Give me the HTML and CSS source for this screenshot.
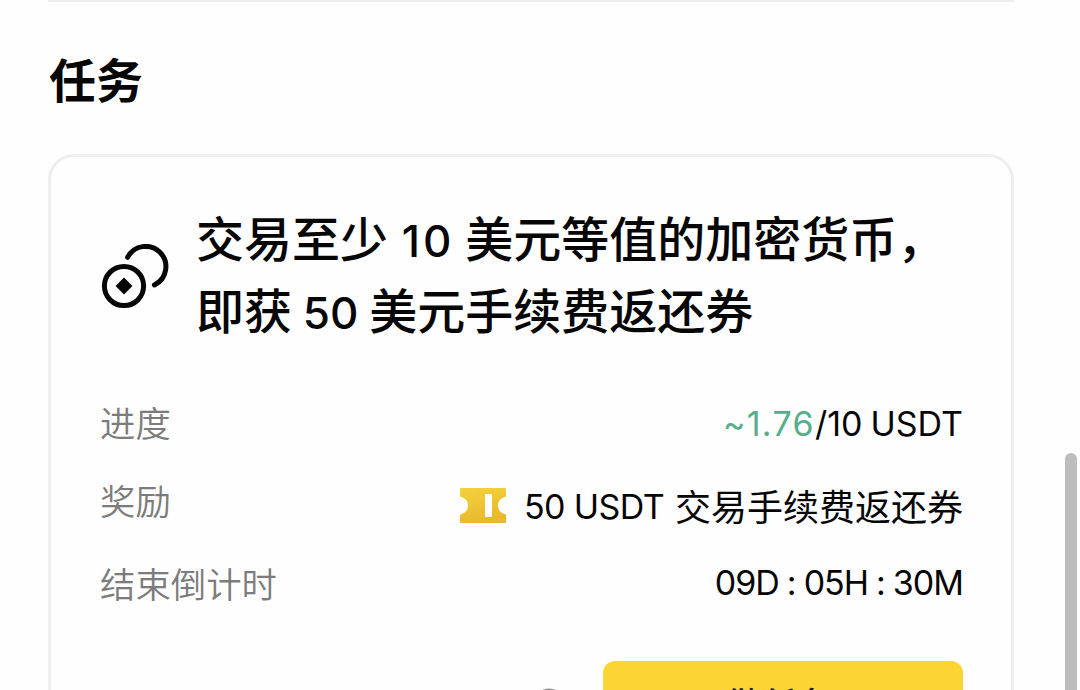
FILE: index.html
```html
<!DOCTYPE html>
<html lang="zh-CN">
<head>
<meta charset="utf-8">
<title>任务</title>
<link rel="stylesheet" href="styles.css">
</head>
<body>
<main class="page">
  <h1 class="section-title">任务</h1>
  <section class="card">
    <header class="card-head">
      <svg class="coins" viewBox="0 0 70 68" fill="none" stroke="#060606" stroke-width="5" stroke-linecap="round">
        <circle cx="24" cy="42" r="19.6"/>
        <path d="M27.6 13.3A20.3 20.3 0 1 1 54.4 41"/>
        <path d="M24 33.5L32.5 42L24 50.5L15.5 42Z" fill="#060606" stroke="none"/>
      </svg>
      <h2 class="card-title">交易至少 <span class="num num-wide">10</span> 美元等值的加密货币，<br>即获 <span class="num">50</span> 美元手续费返还券</h2>
    </header>
    <dl class="rows">
      <div class="row row-progress">
        <dt>进度</dt>
        <dd class="latin progress"><span class="done">~1.76</span><span class="total">/10</span><span class="unit">USDT</span></dd>
      </div>
      <div class="row row-reward">
        <dt>奖励</dt>
        <dd class="reward">
          <svg class="ticket" viewBox="0 0 46 36">
            <defs><linearGradient id="gold" x1="0" y1="0" x2="0.3" y2="1"><stop offset="0" stop-color="#f4d23d"/><stop offset="1" stop-color="#e9b92c"/></linearGradient></defs>
            <path fill="url(#gold)" d="M1 0H45Q46 0 46 1V8.5C40.500 10 38 13 38 17.500S40.500 25 46 26.500V34Q46 35 45 35H1Q0 35 0 34V26.500C5.500 25 8 22 8 17.500S5.500 10 0 8.500V1Q0 0 1 0Z"/>
            <rect x="25" y="6" width="7" height="23" rx="1" fill="#fff"/>
          </svg>
          <span class="latin amount">50 USDT</span><span class="coupon">交易手续费返还券</span>
        </dd>
      </div>
      <div class="row row-time">
        <dt>结束倒计时</dt>
        <dd class="latin time"><span>09D</span><span>:</span><span>05H</span><span>:</span><span>30M</span></dd>
      </div>
    </dl>
    <footer class="actions">
      <svg class="info" viewBox="0 0 36 36" fill="none" stroke="#929292" stroke-width="3"><circle cx="18" cy="18" r="16"/><path d="M18 16v10M18 9v3"/></svg>
      <button class="go">做任务</button>
    </footer>
  </section>
</main>
<div class="scrollbar"></div>
</body>
</html>
```
FILE: styles.css
```css
* { box-sizing: border-box; margin: 0; padding: 0; }
html, body { height: 690px; overflow: hidden; }
body {
  background: #fefefe;
  color: #060606;
  font-family: "Noto Sans CJK SC", sans-serif;
}
.page {
  width: 966px;
  height: 690px;
  overflow: hidden;
  margin-left: 48px;
  border-top: 2px solid #ededed;
}
.section-title {
  height: 152px;
  padding: 40px 0 0 1px;
  font-size: 47px;
  line-height: 72px;
  font-weight: 700;
}
.card {
  height: 640px;
  padding: 43px 48px 0 50px;
  border: 3px solid #eee;
  border-radius: 26px;
}
.card-head { display: flex; height: 144px; }
.coins { width: 70px; height: 68px; margin: 44px 26px 0 -1px; flex: none; }
.card-title {
  font-size: 48px;
  line-height: 72px;
  font-weight: 500;
  white-space: nowrap;
}
.num { font-family: Inter, sans-serif; font-size: 44px; font-weight: 500; line-height: 1; }
.num-wide { margin-left: 3px; letter-spacing: 3px; }
.rows { padding-top: 51px; font-size: 36px; }
.row { display: flex; justify-content: space-between; line-height: 54px; }
.row dt { margin-left: -1px; color: #7c7c7c; font-size: 35.4px; font-weight: 350; }
.row-progress { height: 78px; }
.row-reward { height: 83px; }
.latin { font-family: Inter, sans-serif; font-size: 34px; font-weight: 400; }
.progress { display: flex; padding-top: 2px; }
.done { color: #56ae8c; letter-spacing: 1.3px; }
.unit { margin-left: 8px; }
.reward { display: flex; padding-top: 5px; }
.ticket { width: 46px; height: 36px; margin: 10px 18px 0 0; }
.amount { margin-right: 11px; padding-top: 2px; letter-spacing: -0.6px; }
.time { display: flex; gap: 8px; letter-spacing: -1px; }
.actions { display: flex; justify-content: flex-end; padding-top: 51px; }
.info { width: 36px; height: 36px; margin: 27px 36px 0 0; }
.go {
  width: 360px;
  height: 90px;
  padding: 0 8px 6px 0;
  border: 0;
  border-radius: 12px;
  background: #fcd535;
  color: #202020;
  font-family: "Noto Sans CJK SC", sans-serif;
  font-size: 36px;
  font-weight: 500;
}
.scrollbar {
  position: absolute;
  top: 453px;
  left: 1065px;
  width: 12px;
  height: 237px;
  border-radius: 6px 6px 0 0;
  background: #bdbdbd;
}
```
